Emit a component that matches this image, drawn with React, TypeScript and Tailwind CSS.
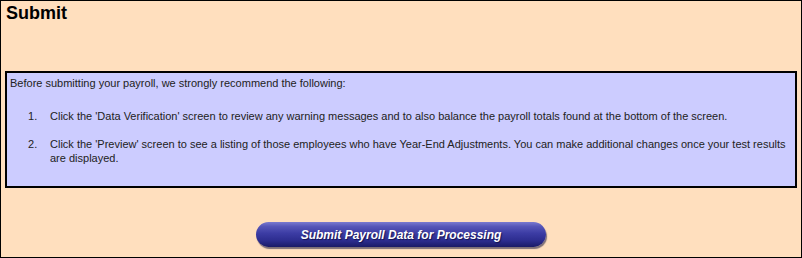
export default function App() {
  const steps = [
    "Click the 'Data Verification' screen to review any warning messages and to also balance the payroll totals found at the bottom of the screen.",
    "Click the 'Preview' screen to see a listing of those employees who have Year-End Adjustments. You can make additional changes once your test results are displayed.",
  ]

  return (
    <div className="w-[802px] h-[258px] border border-black bg-[#ffdfbe] font-['Liberation_Sans',Arial,sans-serif] text-black">
      {/* Header */}
      <h1 className="pl-[5px] pt-[2px] text-[18px] leading-[21px] font-bold">Submit</h1>

      {/* Recommendations */}
      <div className="mx-[4px] mt-[47px] h-[117px] border-2 border-black bg-[#ccccff] pl-[3px] pt-[3px] text-[11px] leading-[14px] text-[#222]">
        <p>Before submitting your payroll, we strongly recommend the following:</p>
        <ol className="mt-[19px] space-y-[14px]">
          {steps.map((step, i) => (
            <li key={i} className="flex">
              <span className="w-[40px] shrink-0 pl-[18px]">{i + 1}.</span>
              <span>{step}</span>
            </li>
          ))}
        </ol>
      </div>

      {/* Action */}
      <div className="flex justify-center mt-[34px]">
        <button className="w-[290px] h-[25px] rounded-full bg-[linear-gradient(to_bottom,#7a7ad0_0%,#5656b8_18%,#3c3ca4_45%,#2c2c8e_75%,#1a1a66_100%)] shadow-[1px_2px_1px_rgba(20,20,60,0.55)] text-white text-[12px] font-bold italic [text-shadow:1px_1px_1px_rgba(0,0,40,0.6)]">
          Submit Payroll Data for Processing
        </button>
      </div>
    </div>
  )
}
